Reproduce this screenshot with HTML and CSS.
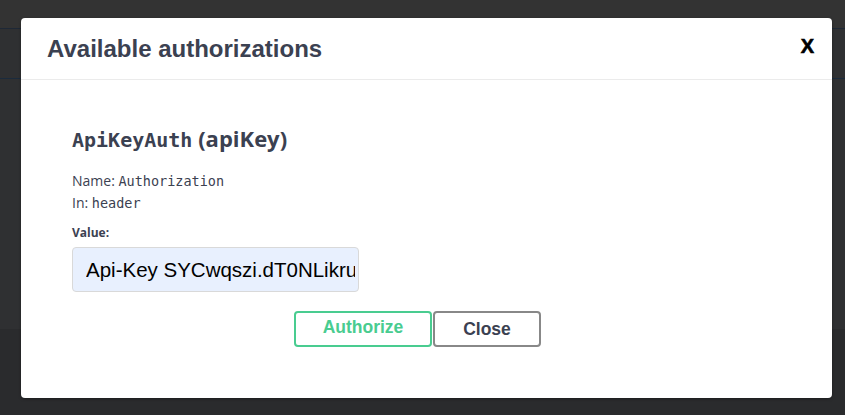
FILE: index.html
```html
<!DOCTYPE html>
<html lang="en">
<head>
<meta charset="utf-8">
<title>Available authorizations</title>
<link rel="stylesheet" href="styles.css">
</head>
<body>
<div class="backdrop">
  <div class="modal">
    <div class="modal-header">
      <h3 class="modal-title">Available authorizations</h3>
      <button class="close-x" type="button" aria-label="Close">X</button>
    </div>
    <div class="modal-body">
      <h4 class="scheme"><code class="scheme-code">ApiKeyAuth</code>&nbsp;(apiKey)</h4>
      <p class="meta">Name: <code class="mono">Authorization</code></p>
      <p class="meta">In: <code class="mono">header</code></p>
      <label class="value-label" for="apikey">Value:</label>
      <input id="apikey" class="value-input" type="text" value="Api-Key SYCwqszi.dT0NLikrutx8Yq2xJ">
      <div class="btn-row">
        <button class="btn btn-auth" type="button">Authorize</button>
        <button class="btn btn-close" type="button">Close</button>
      </div>
    </div>
  </div>
</div>
</body>
</html>
```

FILE: styles.css
```css
* { box-sizing: border-box; }
html, body { margin: 0; padding: 0; }
body {
  width: 845px;
  height: 415px;
  overflow: hidden;
  background: linear-gradient(to bottom,
    #333333 0, #333333 28px,
    #1e2836 28px, #1e2836 29px,
    #2f3032 29px, #2f3032 78px,
    #1b2b3d 78px, #1b2b3d 79px,
    #2f3032 79px, #2f3032 329px,
    #2a2b2d 329px);
}
.backdrop {
  padding: 18px 13px 0 21px;
}
.modal {
  width: 811px;
  height: 380px;
  background: #ffffff;
  border-radius: 4px;
  box-shadow: 0 1px 3px rgba(0,0,0,0.35);
  display: flex;
  flex-direction: column;
}
.modal-header {
  height: 62px;
  border-bottom: 1px solid #ebebeb;
  display: flex;
  align-items: center;
  justify-content: space-between;
  padding: 0 18px 0 26px;
}
.modal-title {
  margin: 0;
  font-family: "Liberation Sans", Arial, sans-serif;
  font-weight: 700;
  font-size: 24px;
  color: #3b4151;
  padding-top: 1px;
}
.close-x {
  background: none;
  border: none;
  padding: 0;
  margin: 0;
  margin-top: -5px;
  font-family: "Liberation Sans", Arial, sans-serif;
  font-weight: 700;
  font-size: 20px;
  color: #000000;
  line-height: 1;
  cursor: pointer;
  -webkit-text-stroke: 0.6px #000000;
}
.modal-body {
  padding: 40px 69px 0 51px;
  display: flex;
  flex-direction: column;
  align-items: flex-start;
}
.scheme {
  margin: 4px 0 16px 0;
  font-family: "Open Sans", sans-serif;
  font-weight: 700;
  font-size: 22px;
  line-height: 28px;
  color: #3b4151;
}
.scheme-code {
  font-family: "DejaVu Sans Mono", monospace;
  font-weight: 700;
  font-size: 20px;
}
.meta {
  margin: 0;
  font-family: "Open Sans", sans-serif;
  font-size: 14px;
  line-height: 22px;
  color: #3b4151;
}
.mono {
  font-family: "DejaVu Sans Mono", monospace;
  font-size: 13.5px;
}
.value-label {
  margin-top: 10px;
  font-family: "Open Sans", sans-serif;
  font-weight: 700;
  font-size: 12px;
  line-height: 18px;
  color: #3b4151;
}
.value-input {
  margin-top: 5px;
  width: 287px;
  height: 45px;
  padding: 0 3px 0 13px;
  border: 1px solid #d9d9d9;
  border-radius: 4px;
  background: #e8f0fe;
  font-family: "Liberation Sans", Arial, sans-serif;
  font-size: 20.5px;
  color: #000000;
  outline: none;
}
.btn-row {
  align-self: stretch;
  display: flex;
  justify-content: center;
  margin-top: 19px;
  gap: 1px;
}
.btn {
  height: 36px;
  border-radius: 4px;
  border: 2px solid #888888;
  background: #ffffff;
  font-family: "Liberation Sans", Arial, sans-serif;
  font-weight: 700;
  font-size: 17.5px;
  padding: 0;
  cursor: pointer;
}
.btn-auth {
  width: 138px;
  border-color: #49cc90;
  color: #49cc90;
  padding-bottom: 3px;
}
.btn-close {
  width: 108px;
  color: #3b4151;
  padding-top: 1px;
}
```
